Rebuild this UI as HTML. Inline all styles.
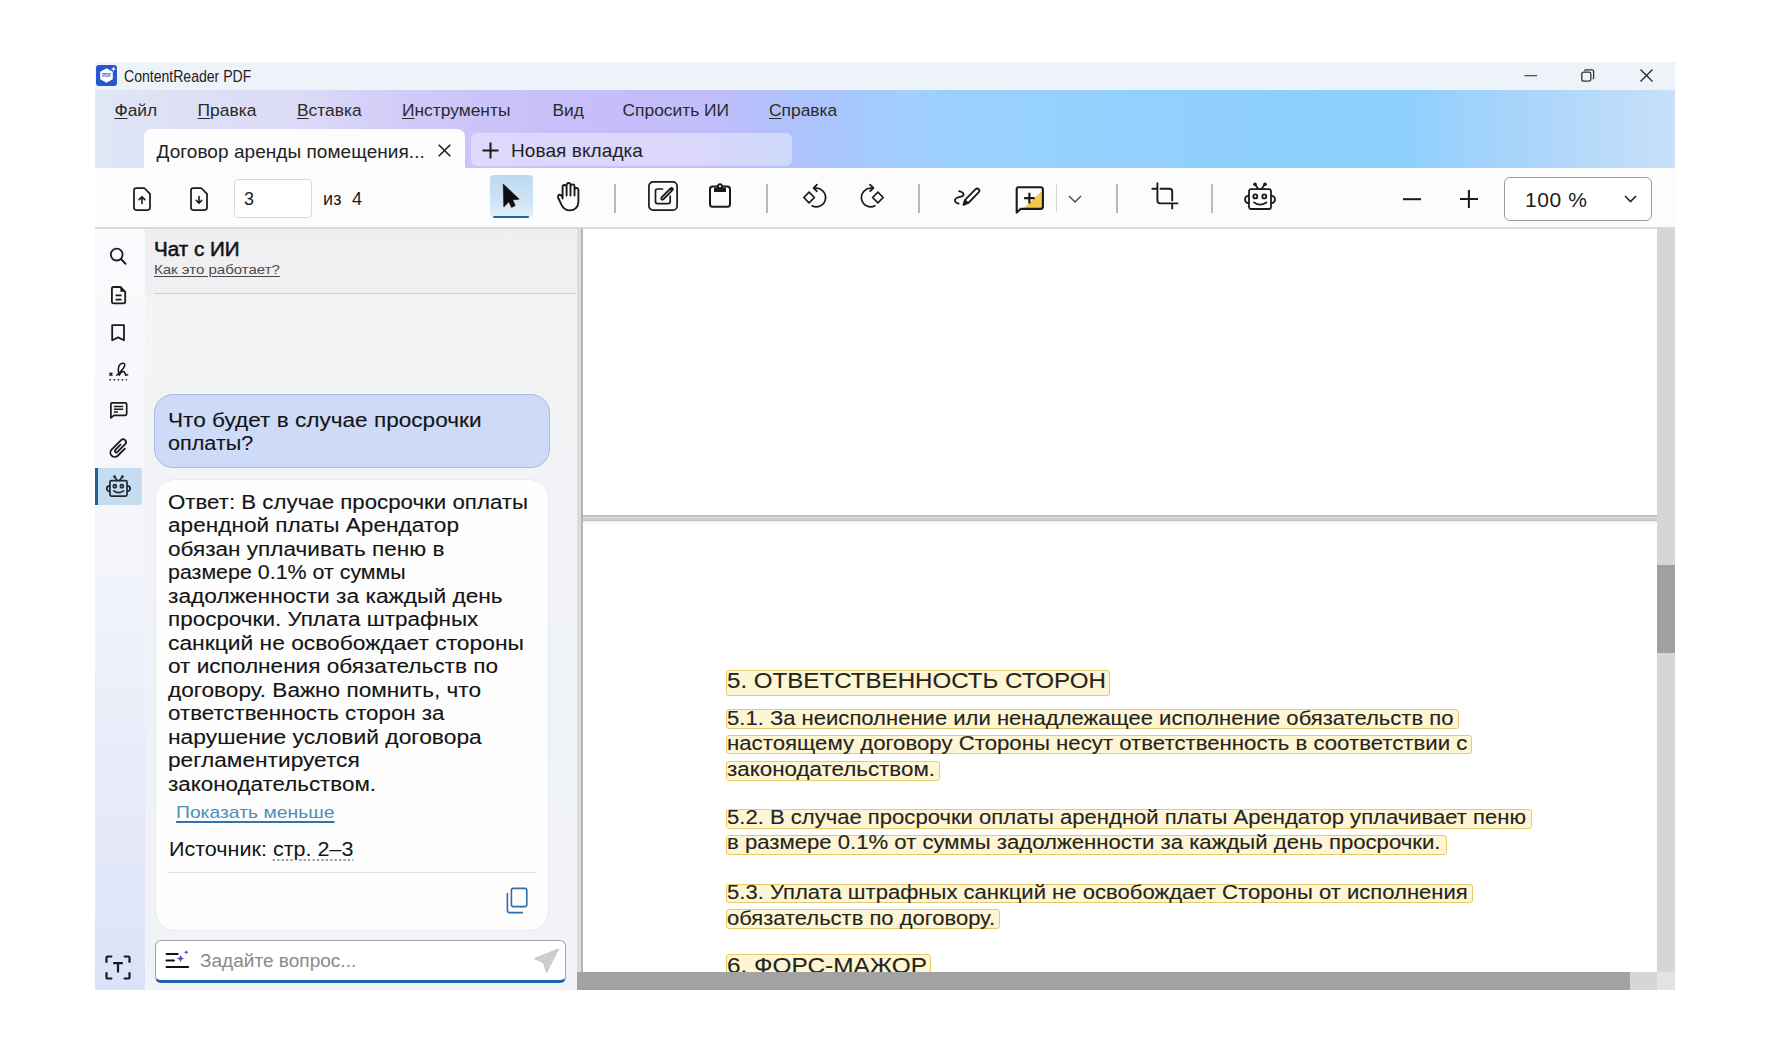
<!DOCTYPE html>
<html><head><meta charset="utf-8">
<style>
*{margin:0;padding:0;box-sizing:border-box}
html,body{width:1769px;height:1052px;overflow:hidden;background:#fff;font-family:"Liberation Sans",sans-serif;color:#1a1a1a}
.a{position:absolute}
svg{position:absolute;overflow:visible}
.t{position:absolute;white-space:nowrap;line-height:1}
.u{text-decoration:underline;text-underline-offset:2px}
</style></head><body>
<div class="a" style="left:95px;top:62px;width:1580px;height:28px;background:#eef2f9"></div>
<div class="a" style="left:95px;top:90px;width:1580px;height:78px;background:linear-gradient(90deg,#dfe6f5 0px,#dcdaf6 205px,#d2cbf8 305px,#cac2f9 405px,#c6bdfa 505px,#c3bdfa 605px,#b4c0fa 673px,#a9c6fc 741px,#a3cefd 809px,#9ad2fd 876px,#8ecefd 1180px,#8fcffd 1315px,#9fd2fc 1375px,#afd6fa 1455px,#bcdcf9 1525px,#c8e0f8 1580px)"></div>
<div class="a" style="left:95px;top:168px;width:1580px;height:59px;background:#fcfcfc"></div>
<div class="a" style="left:95px;top:227px;width:1580px;height:2px;background:#d9d9d9"></div>
<div class="a" style="left:95px;top:229px;width:50px;height:761px;background:linear-gradient(180deg,#f9fafc 0%,#f4f6fb 40%,#e7ebf9 72%,#dce2f8 100%)"></div>
<div class="a" style="left:145px;top:229px;width:432px;height:761px;background:linear-gradient(180deg,#efeff1 0px,#f0f0f2 64px,#f3f4f5 70px,#f2f3f6 250px,#eff2f7 450px,#f1f3f7 761px)"></div>
<div class="a" style="left:577px;top:229px;width:4px;height:743px;background:#dcdcdc"></div>
<div class="a" style="left:581px;top:229px;width:2px;height:743px;background:#b4b4b4"></div>
<div class="a" style="left:583px;top:229px;width:1074px;height:743px;background:#fff"></div>
<div class="a" style="left:1657px;top:229px;width:18px;height:743px;background:#d6d6d6"></div>
<div class="a" style="left:1657px;top:565px;width:18px;height:88px;background:#a0a0a0"></div>
<div class="a" style="left:577px;top:972px;width:1080px;height:18px;background:#d6d6d6"></div>
<div class="a" style="left:577px;top:972px;width:1053px;height:18px;background:#a2a2a2"></div>
<div class="a" style="left:1657px;top:972px;width:18px;height:18px;background:#e3e3e3"></div>
<svg style="left:96px;top:65px" width="21" height="21" viewBox="0 0 21 21"><rect x="0" y="0" width="21" height="21" rx="3" fill="#2657cf"/><path d="M10.5 3.2 L16.8 6.8 V14.2 L10.5 17.8 L4.2 14.2 V6.8 Z" fill="#fff"/><text x="10.5" y="12.2" font-size="4.6" font-family="Liberation Sans" font-weight="700" fill="#2b5fd9" text-anchor="middle">PDF</text><path d="M17.5 1.5 L18.2 3.3 L20 4 L18.2 4.7 L17.5 6.5 L16.8 4.7 L15 4 L16.8 3.3Z" fill="#fff"/></svg>
<div class="t" style="left:124px;top:68.66px;font-size:16px;color:#1e1e1e;transform:scaleX(0.878);transform-origin:0 0">ContentReader PDF</div>
<svg style="left:1524px;top:75px" width="14" height="2" viewBox="0 0 14 2"><line x1="0.5" y1="0.7" x2="13" y2="0.7" stroke="#333" stroke-width="1.1"/></svg>
<svg style="left:1581px;top:69px" width="14" height="13" viewBox="0 0 14 13"><rect x="0.8" y="3.2" width="9" height="9" rx="1.8" fill="none" stroke="#333" stroke-width="1.3"/><path d="M3.4 1.8 Q3.8 0.8 5 0.8 H11 Q12.6 0.8 12.6 2.4 V8.6 Q12.6 9.6 11.8 10" fill="none" stroke="#333" stroke-width="1.3"/></svg>
<svg style="left:1640px;top:69px" width="13" height="13" viewBox="0 0 13 13"><path d="M0.5 0.5 L12.5 12.5 M12.5 0.5 L0.5 12.5" stroke="#222" stroke-width="1.3"/></svg>
<div class="t" style="left:114.4px;top:101.77px;font-size:17.4px;color:#2a2a2a;text-underline-offset:1.5px;text-decoration-thickness:1px"><u>Ф</u>айл</div>
<div class="t" style="left:197.6px;top:101.77px;font-size:17.4px;color:#2a2a2a;text-underline-offset:1.5px;text-decoration-thickness:1px"><u>П</u>равка</div>
<div class="t" style="left:297px;top:101.77px;font-size:17.4px;color:#2a2a2a;text-underline-offset:1.5px;text-decoration-thickness:1px"><u>В</u>ставка</div>
<div class="t" style="left:402px;top:101.77px;font-size:17.4px;color:#2a2a2a;text-underline-offset:1.5px;text-decoration-thickness:1px"><u>И</u>нструменты</div>
<div class="t" style="left:552.4px;top:101.77px;font-size:17.4px;color:#2a2a2a;text-underline-offset:1.5px;text-decoration-thickness:1px">Вид</div>
<div class="t" style="left:622.5px;top:101.77px;font-size:17.4px;color:#2a2a2a;text-underline-offset:1.5px;text-decoration-thickness:1px">Спросить ИИ</div>
<div class="t" style="left:769px;top:101.77px;font-size:17.4px;color:#2a2a2a;text-underline-offset:1.5px;text-decoration-thickness:1px"><u>С</u>правка</div>
<div class="a" style="left:144px;top:129px;width:321px;height:40px;background:#fdfdfd;border-radius:8px 8px 0 0"></div>
<div class="t" style="left:156.5px;top:141.92px;font-size:19px;color:#222;letter-spacing:0.05px">Договор аренды помещения...</div>
<svg style="left:438px;top:144px" width="13" height="13" viewBox="0 0 13 13"><path d="M0.7 0.7 L12.3 12.3 M12.3 0.7 L0.7 12.3" stroke="#222" stroke-width="1.6"/></svg>
<div class="a" style="left:471px;top:133px;width:321px;height:33px;background:rgba(255,255,255,0.38);border-radius:6px"></div>
<svg style="left:482px;top:142px" width="17" height="17" viewBox="0 0 17 17"><path d="M8.5 0.5 V16.5 M0.5 8.5 H16.5" stroke="#1a1a1a" stroke-width="2"/></svg>
<div class="t" style="left:511px;top:141.42px;font-size:19px;color:#222;letter-spacing:0.08px">Новая вкладка</div>
<svg style="left:133px;top:187px" width="18" height="24" viewBox="0 0 18 24"><path d="M3.3 1 H11.2 L17 6.8 V20.6 Q17 23 14.6 23 H3.4 Q1 23 1 20.6 V3.4 Q1 1 3.3 1Z" fill="none" stroke="#1a1a1a" stroke-width="1.75" stroke-linejoin="round"/><path d="M9 16.5 V9.8 M6.2 12.6 L9 9.7 L11.8 12.6" fill="none" stroke="#1a1a1a" stroke-width="1.6" stroke-linecap="round" stroke-linejoin="round"/></svg>
<svg style="left:190px;top:187px" width="18" height="24" viewBox="0 0 18 24"><path d="M3.3 1 H11.2 L17 6.8 V20.6 Q17 23 14.6 23 H3.4 Q1 23 1 20.6 V3.4 Q1 1 3.3 1Z" fill="none" stroke="#1a1a1a" stroke-width="1.75" stroke-linejoin="round"/><path d="M9 9.5 V16 M6.2 13.3 L9 16.2 L11.8 13.3" fill="none" stroke="#1a1a1a" stroke-width="1.6" stroke-linecap="round" stroke-linejoin="round"/></svg>
<div class="a" style="left:234px;top:179px;width:78px;height:39px;background:#fff;border:1.5px solid #d9d9d9;border-radius:4px"></div>
<div class="t" style="left:244px;top:189.76px;font-size:18px;color:#1a1a1a">3</div>
<div class="t" style="left:323px;top:189.76px;font-size:18px;color:#1a1a1a;letter-spacing:0.3px">из</div>
<div class="t" style="left:352px;top:189.76px;font-size:18px;color:#1a1a1a">4</div>
<div class="a" style="left:489.5px;top:174.5px;width:43.5px;height:43.5px;background:linear-gradient(180deg,#bcdaf0 0%,#d0e4f4 60%,#e4eff9 100%);border-radius:4px"></div>
<div class="a" style="left:493px;top:215.5px;width:36px;height:2.6px;background:#1d66a6;border-radius:1.5px"></div>
<svg style="left:502.9px;top:184.3px" width="17" height="24" viewBox="0 0 17 24"><path d="M0.2 0 L0.8 23 L5.8 17.8 L8.6 23.4 L12.2 21.6 L9.6 15.8 L16.2 15.2 Z" fill="#0d0d0d" stroke="#0d0d0d" stroke-width="0.6" stroke-linejoin="round"/></svg>
<svg style="left:557px;top:181.5px" width="23" height="30" viewBox="0 0 23 30"><path d="M5.6 16.5 V5 A2 2 0 0 1 9.6 5 V13.5 M9.6 12.5 V2.6 A2 2 0 0 1 13.5 2.6 V13.5 M13.5 12.5 V4.4 A2 2 0 0 1 17.5 4.4 V13.5 M17.5 12.5 V7.6 A2 2 0 0 1 21.4 7.6 V19.5 C21.4 25.2 17.6 28.4 12.8 28.4 C8.6 28.4 6.1 26 4.4 22.6 L1.3 16 C0.6 14.4 1.2 13 2.5 12.8 C3.7 12.6 4.7 13.5 5.6 15.5" fill="none" stroke="#1a1a1a" stroke-width="1.9" stroke-linecap="round" stroke-linejoin="round"/></svg>
<div class="a" style="left:614.25px;top:184px;width:1.5px;height:29px;background:#b9b9b9"></div>
<div class="a" style="left:766.25px;top:184px;width:1.5px;height:29px;background:#b9b9b9"></div>
<div class="a" style="left:918.25px;top:184px;width:1.5px;height:29px;background:#b9b9b9"></div>
<div class="a" style="left:1055.85px;top:184px;width:1.5px;height:28px;background:#d2d2d2"></div>
<div class="a" style="left:1116.25px;top:184px;width:1.5px;height:29px;background:#b9b9b9"></div>
<div class="a" style="left:1211.25px;top:184px;width:1.5px;height:29px;background:#b9b9b9"></div>
<svg style="left:647.8px;top:181px" width="30" height="30" viewBox="0 0 30 30"><rect x="0.9" y="0.9" width="28.2" height="28.2" rx="4.2" fill="none" stroke="#1a1a1a" stroke-width="1.7"/><path d="M14.5 8 H9.5 Q7.5 8 7.5 10 V20.6 Q7.5 22.6 9.5 22.6 H20.2 Q22.2 22.6 22.2 20.6 V15" fill="none" stroke="#1a1a1a" stroke-width="1.7" stroke-linecap="round"/><path d="M13.6 16.4 L22.6 7.4 Q23.6 6.4 24.5 7.3 Q25.4 8.2 24.4 9.2 L15.4 18.2 Q14.3 19 13.6 18.3 Q12.9 17.5 13.6 16.4Z" fill="none" stroke="#1a1a1a" stroke-width="1.9"/><path d="M22.4 7.6 L24.2 9.4" stroke="#1a1a1a" stroke-width="2.2"/></svg>
<svg style="left:709px;top:182.5px" width="22" height="25" viewBox="0 0 22 25"><rect x="1" y="3.6" width="20" height="20.2" rx="2.6" fill="none" stroke="#1a1a1a" stroke-width="2"/><rect x="5" y="4.4" width="12" height="4.6" rx="0.6" fill="#1a1a1a"/><circle cx="11" cy="3.2" r="2.9" fill="#1a1a1a"/><circle cx="11" cy="3.3" r="1.1" fill="#fcfcfc"/></svg>
<svg style="left:795px;top:178px" width="40" height="36" viewBox="0 0 40 36"><path d="M14.1 14.2 L19.4 19.5 L14.1 24.8 L8.8 19.5 Z" fill="none" stroke="#1a1a1a" stroke-width="1.7" stroke-linejoin="round"/><path d="M19.5 10.4 A9.3 9.3 0 1 1 17 27.8" fill="none" stroke="#1a1a1a" stroke-width="1.7" stroke-linecap="round"/><path d="M22 6.6 L18.6 10 L21.8 13.2" fill="none" stroke="#1a1a1a" stroke-width="1.8" stroke-linecap="round" stroke-linejoin="round"/></svg>
<svg style="left:852px;top:178px" width="40" height="36" viewBox="0 0 40 36"><g transform="translate(40,0) scale(-1,1)"><path d="M14.1 14.2 L19.4 19.5 L14.1 24.8 L8.8 19.5 Z" fill="none" stroke="#1a1a1a" stroke-width="1.7" stroke-linejoin="round"/><path d="M19.5 10.4 A9.3 9.3 0 1 1 17 27.8" fill="none" stroke="#1a1a1a" stroke-width="1.7" stroke-linecap="round"/><path d="M22 6.6 L18.6 10 L21.8 13.2" fill="none" stroke="#1a1a1a" stroke-width="1.8" stroke-linecap="round" stroke-linejoin="round"/></g></svg>
<svg style="left:945px;top:178px" width="40" height="32" viewBox="0 0 40 32"><path d="M14.1 13.1 C17 13.6 19.2 15.6 18.4 17.4 C17.6 19.2 13.4 18.6 11 20.4 C8.8 22 9.8 25 13.7 25.6" fill="none" stroke="#1a1a1a" stroke-width="1.8" stroke-linecap="round"/><path d="M18.4 26.8 L20.05 21.8 L30.4 11.4 Q32 9.8 33.7 11.2 Q35.2 12.8 33.6 14.4 L23.35 25 Z" fill="none" stroke="#1a1a1a" stroke-width="1.8" stroke-linejoin="round"/><path d="M18.2 27 L20.4 21.4 L24 24.8 Z" fill="#1a1a1a"/></svg>
<svg style="left:1015px;top:186px" width="30" height="28" viewBox="0 0 30 28"><path d="M9 22 L27 5 V22 Z" fill="#f2c94c"/><path d="M3.4 1.3 H25.6 Q27.9 1.3 27.9 3.6 V20.6 Q27.9 22.9 25.6 22.9 H5.6 L1.7 26.6 V3.6 Q1.7 1.3 3.4 1.3Z" fill="none" stroke="#1a1a1a" stroke-width="2.1" stroke-linejoin="round"/><path d="M14.4 6.8 V17.4 M9.1 12.1 H19.7" stroke="#1a1a1a" stroke-width="2.2"/></svg>
<svg style="left:1068px;top:195px" width="14" height="8" viewBox="0 0 14 8"><path d="M1 1 L7 7 L13 1" fill="none" stroke="#444" stroke-width="1.3"/></svg>
<svg style="left:1150px;top:182px" width="30" height="30" viewBox="0 0 30 30"><path d="M7.4 1.3 V18.6 Q7.4 21.4 10.2 21.4 H27.5 M2.3 6.8 H7.4 M10.5 6.8 H19.4 Q22.2 6.8 22.2 9.6 V18.4 M22.2 21.4 V26.6" fill="none" stroke="#1a1a1a" stroke-width="1.9" stroke-linecap="round"/></svg>
<svg style="left:1244px;top:182px" width="32.0" height="30.0" viewBox="0 0 32.0 30.0"><g transform="scale(1.0)" fill="none" stroke="#1a1a1a" stroke-width="1.8"><rect x="5" y="7.2" width="22" height="19.8" rx="2"/><path d="M5 13.6 Q1 14.2 1 17.4 Q1 20.6 5 21.2 M27 13.6 Q31 14.2 31 17.4 Q31 20.6 27 21.2"/><circle cx="11.3" cy="14.4" r="2"/><circle cx="20.3" cy="14.4" r="2"/><path d="M10 20.4 Q16 25 22.4 20.4" stroke-linecap="round"/><path d="M14.3 7 L11 2.2 M17.3 7 L21 2.2" stroke-linecap="round"/></g><g transform="scale(1.0)" fill="#1a1a1a"><circle cx="11" cy="2.2" r="1.8"/><circle cx="21" cy="2.2" r="1.8"/></g></svg>
<svg style="left:1402px;top:198px" width="20" height="3" viewBox="0 0 20 3"><line x1="1" y1="1.2" x2="19" y2="1.2" stroke="#1a1a1a" stroke-width="2"/></svg>
<svg style="left:1459px;top:189px" width="20" height="20" viewBox="0 0 20 20"><path d="M9.9 1 V19 M1 10 H19" stroke="#1a1a1a" stroke-width="2"/></svg>
<div class="a" style="left:1504px;top:176.5px;width:147.5px;height:44px;background:#fff;border:1.5px solid #9a9a9a;border-radius:6px"></div>
<div class="t" style="left:1525px;top:188.72px;font-size:21px;color:#1a1a1a;letter-spacing:0.6px">100 %</div>
<svg style="left:1624px;top:195px" width="13" height="8" viewBox="0 0 13 8"><path d="M1 1 L6.5 6.5 L12 1" fill="none" stroke="#222" stroke-width="1.6"/></svg>
<svg style="left:108px;top:247px" width="20" height="20" viewBox="0 0 20 20"><circle cx="8.7" cy="7.6" r="5.9" fill="none" stroke="#1a1a1a" stroke-width="1.8"/><path d="M13 12 L17.6 16.8" stroke="#1a1a1a" stroke-width="1.9" stroke-linecap="round"/></svg>
<svg style="left:111px;top:286px" width="16" height="19" viewBox="0 0 16 19"><path d="M2.6 1 H9.4 L14.2 5.8 V15.6 Q14.2 17.4 12.4 17.4 H2.6 Q0.9 17.4 0.9 15.6 V2.8 Q0.9 1 2.6 1Z" fill="none" stroke="#1a1a1a" stroke-width="1.8" stroke-linejoin="round"/><path d="M9.4 1 V5.8 H14.2Z" fill="#1a1a1a"/><path d="M4.6 9.4 H10.6 M4.6 13.6 H10.6" stroke="#1a1a1a" stroke-width="1.7"/></svg>
<svg style="left:111px;top:324px" width="15" height="18" viewBox="0 0 15 18"><path d="M1.2 1.2 H13 V16.2 L7.1 13.4 L1.2 16.2 Z" fill="none" stroke="#1a1a1a" stroke-width="1.8" stroke-linejoin="round"/></svg>
<svg style="left:108px;top:362px" width="21" height="20" viewBox="0 0 21 20"><path d="M8.8 13.3 C12 10 17.6 5.6 16.8 2.4 C16.2 0.4 12.4 0.8 11.2 3.6 C10.2 6 10.2 10.6 11.3 13.3 C12 11.4 13 9.6 14.8 9.4 C17.2 9.2 17.2 12 17.7 13.3 L19.7 12.6" fill="none" stroke="#1a1a1a" stroke-width="1.5" stroke-linecap="round" stroke-linejoin="round"/><path d="M1.4 10.8 L4.4 13.8 M4.4 10.8 L1.4 13.8" stroke="#1a1a1a" stroke-width="1.4"/><path d="M1.4 17.7 H19" stroke="#333" stroke-width="1.5" stroke-dasharray="1.6 2.5"/></svg>
<svg style="left:109px;top:401px" width="20" height="19" viewBox="0 0 20 19"><path d="M2.9 1.9 H16.2 Q17.7 1.9 17.7 3.4 V12.8 Q17.7 14.3 16.2 14.3 H5 L1.9 16.9 V3.4 Q1.9 1.9 2.9 1.9Z" fill="none" stroke="#1a1a1a" stroke-width="1.7" stroke-linejoin="round"/><path d="M4.9 5.4 H14.2 M4.9 8.2 H14.2 M4.9 10.9 H9" stroke="#1a1a1a" stroke-width="1.5"/></svg>
<svg style="left:109.3px;top:436.8px" width="20" height="20" viewBox="0 0 20 20"><path d="M15.9 11.6 L8.75 18.75 A4.35 4.35 0 0 1 2.6 12.6 L12.1 3.1 A2.9 2.9 0 0 1 16.2 7.2 L8.45 14.95 A1.48 1.48 0 0 1 6.35 12.85 L11.5 7.7" fill="none" stroke="#1a1a1a" stroke-width="1.8" stroke-linecap="round"/></svg>
<div class="a" style="left:95.4px;top:468.3px;width:46.6px;height:36.4px;background:#c6dcf1;border-radius:0 2px 2px 0"></div>
<div class="a" style="left:95px;top:468.3px;width:3px;height:36.4px;background:#245f8e"></div>
<svg style="left:106px;top:475.4px" width="24.96" height="23.400000000000002" viewBox="0 0 24.96 23.400000000000002"><g transform="scale(0.78)" fill="none" stroke="#1f2a36" stroke-width="2.2"><rect x="5" y="7.2" width="22" height="19.8" rx="2"/><path d="M5 13.6 Q1 14.2 1 17.4 Q1 20.6 5 21.2 M27 13.6 Q31 14.2 31 17.4 Q31 20.6 27 21.2"/><circle cx="11.3" cy="14.4" r="2"/><circle cx="20.3" cy="14.4" r="2"/><path d="M10 20.4 Q16 25 22.4 20.4" stroke-linecap="round"/><path d="M14.3 7 L11 2.2 M17.3 7 L21 2.2" stroke-linecap="round"/></g><g transform="scale(0.78)" fill="#1f2a36"><circle cx="11" cy="2.2" r="1.8"/><circle cx="21" cy="2.2" r="1.8"/></g></svg>
<svg style="left:105px;top:955px" width="27" height="26" viewBox="0 0 27 26"><path d="M1.5 7 V2.6 Q1.5 1.5 2.6 1.5 H6.4 M19.6 1.5 H23.4 Q24.5 1.5 24.5 2.6 V7 M24.5 18 V22.4 Q24.5 23.5 23.4 23.5 H19.6 M6.4 23.5 H2.6 Q1.5 23.5 1.5 22.4 V18" fill="none" stroke="#1a1a1a" stroke-width="2.2" stroke-linecap="round"/><path d="M8.2 8.2 H17.8 M13 8.2 V17.6" stroke="#1a1a1a" stroke-width="2.2"/></svg>
<div class="t" style="left:154px;top:239.07px;font-size:20px;color:#141414;transform:scaleX(1.03);transform-origin:0 0;-webkit-text-stroke:0.55px #141414">Чат с ИИ</div>
<div class="t" style="left:154px;top:262.97px;font-size:13.5px;color:#4a4a4a;transform:scaleX(1.113);transform-origin:0 0;text-decoration:underline;text-underline-offset:1.5px;text-decoration-thickness:1px">Как это работает?</div>
<div class="a" style="left:154px;top:292.5px;width:422px;height:1.6px;background:#cfd0d4"></div>
<div class="a" style="left:154px;top:394px;width:396px;height:74px;background:#cddbf9;border:1px solid #a9b9e6;border-radius:19px"></div>
<div class="t" style="left:167.6px;top:409.67px;font-size:20px;color:#141414;transform:scaleX(1.1300);transform-origin:0 0;-webkit-text-stroke:0.12px #141414">Что будет в случае просрочки</div>
<div class="t" style="left:167.6px;top:432.67px;font-size:20px;color:#141414;transform:scaleX(1.0810);transform-origin:0 0;-webkit-text-stroke:0.12px #141414">оплаты?</div>
<div class="a" style="left:154.6px;top:479px;width:394px;height:452px;background:#fdfdfd;border:1px solid #e9eaee;border-radius:20px"></div>
<div class="t" style="left:168px;top:491.57px;font-size:20px;color:#141414;transform:scaleX(1.1136);transform-origin:0 0;-webkit-text-stroke:0.12px #141414">Ответ: В случае просрочки оплаты</div>
<div class="t" style="left:168px;top:515.07px;font-size:20px;color:#141414;transform:scaleX(1.1304);transform-origin:0 0;-webkit-text-stroke:0.12px #141414">арендной платы Арендатор</div>
<div class="t" style="left:168px;top:538.57px;font-size:20px;color:#141414;transform:scaleX(1.1283);transform-origin:0 0;-webkit-text-stroke:0.12px #141414">обязан уплачивать пеню в</div>
<div class="t" style="left:168px;top:562.07px;font-size:20px;color:#141414;transform:scaleX(1.0704);transform-origin:0 0;-webkit-text-stroke:0.12px #141414">размере 0.1% от суммы</div>
<div class="t" style="left:168px;top:585.57px;font-size:20px;color:#141414;transform:scaleX(1.1365);transform-origin:0 0;-webkit-text-stroke:0.12px #141414">задолженности за каждый день</div>
<div class="t" style="left:168px;top:609.07px;font-size:20px;color:#141414;transform:scaleX(1.1231);transform-origin:0 0;-webkit-text-stroke:0.12px #141414">просрочки. Уплата штрафных</div>
<div class="t" style="left:168px;top:632.57px;font-size:20px;color:#141414;transform:scaleX(1.1404);transform-origin:0 0;-webkit-text-stroke:0.12px #141414">санкций не освобождает стороны</div>
<div class="t" style="left:168px;top:656.07px;font-size:20px;color:#141414;transform:scaleX(1.1296);transform-origin:0 0;-webkit-text-stroke:0.12px #141414">от исполнения обязательств по</div>
<div class="t" style="left:168px;top:679.57px;font-size:20px;color:#141414;transform:scaleX(1.1301);transform-origin:0 0;-webkit-text-stroke:0.12px #141414">договору. Важно помнить, что</div>
<div class="t" style="left:168px;top:703.07px;font-size:20px;color:#141414;transform:scaleX(1.1155);transform-origin:0 0;-webkit-text-stroke:0.12px #141414">ответственность сторон за</div>
<div class="t" style="left:168px;top:726.57px;font-size:20px;color:#141414;transform:scaleX(1.1411);transform-origin:0 0;-webkit-text-stroke:0.12px #141414">нарушение условий договора</div>
<div class="t" style="left:168px;top:750.07px;font-size:20px;color:#141414;transform:scaleX(1.1340);transform-origin:0 0;-webkit-text-stroke:0.12px #141414">регламентируется</div>
<div class="t" style="left:168px;top:773.57px;font-size:20px;color:#141414;transform:scaleX(1.1186);transform-origin:0 0;-webkit-text-stroke:0.12px #141414">законодательством.</div>
<div class="t" style="left:175.5px;top:804.11px;font-size:17px;color:#4a8fb8;transform:scaleX(1.136);transform-origin:0 0;text-decoration:underline;text-decoration-color:#2f74b0;text-underline-offset:2.5px;text-decoration-thickness:2px">Показать меньше</div>
<div class="t" style="left:168.5px;top:840.49px;font-size:19.5px;color:#141414;transform:scaleX(1.104);transform-origin:0 0">Источник: <span style="text-decoration:underline dotted #999;text-underline-offset:3px;text-decoration-thickness:1.5px">стр. 2–3</span></div>
<div class="a" style="left:168px;top:871.8px;width:368px;height:1.6px;background:#e2e2e4"></div>
<svg style="left:505px;top:887px" width="24" height="28" viewBox="0 0 24 28"><path d="M6.4 3.4 Q6.4 1.4 8.4 1.4 H19.8 Q21.8 1.4 21.8 3.4 V17.6 Q21.8 19.6 19.8 19.6 H8.4 Q6.4 19.6 6.4 17.6 Z" fill="none" stroke="#2e6da8" stroke-width="1.6"/><path d="M2.4 6.6 V23.6 Q2.4 25.6 4.4 25.6 H17.4" fill="none" stroke="#2e6da8" stroke-width="1.6" stroke-linecap="round"/></svg>
<div class="a" style="left:154.6px;top:940px;width:411.4px;height:42.6px;background:#fff;border:1px solid #a4a4a4;border-bottom:3px solid #1d62a6;border-radius:6px"></div>
<svg style="left:165px;top:948px" width="26" height="22" viewBox="0 0 26 22"><path d="M1.5 5.9 H12.7 M1.5 12.5 H9 M1.5 19 H23.1" stroke="#111" stroke-width="2" stroke-linecap="round"/><path d="M15.5 6.6 Q16 10.1 19.5 10.6 Q16 11.1 15.5 14.6 Q15 11.1 11.5 10.6 Q15 10.1 15.5 6.6Z" fill="#5157c4"/><path d="M21.2 1.9 Q21.5 3.9 23.5 4.2 Q21.5 4.5 21.2 6.5 Q20.9 4.5 18.9 4.2 Q20.9 3.9 21.2 1.9Z" fill="#5157c4"/></svg>
<div class="t" style="left:200px;top:952.46px;font-size:18px;color:#8a8a8a;transform:scaleX(1.058);transform-origin:0 0">Задайте вопрос...</div>
<svg style="left:533px;top:948px" width="27" height="26" viewBox="0 0 27 26"><path d="M25.5 1 L1.5 10.6 L10.4 14.4 L13.6 24.4 Z M25.5 1 L10.4 14.4" fill="#cfcfcf" stroke="#c4c4c4" stroke-width="1" stroke-linejoin="round"/></svg>
<div class="a" style="left:583px;top:515px;width:1074px;height:6px;background:linear-gradient(180deg,#bdbdbd 0%,#bdbdbd 18%,#d4d4d4 35%,#d4d4d4 70%,#bdbdbd 85%,#c4c4c4 100%)"></div>
<div class="a" style="left:583px;top:521px;width:1074px;height:3px;background:linear-gradient(180deg,#f2f2f2,#fcfcfc)"></div>
<div class="a" style="left:725.8px;top:670px;width:384.20000000000005px;height:26px;background:#fdf5d4;border:1.2px solid #e8ca68;border-radius:3px"></div>
<div class="t" style="left:727px;top:669.84px;font-size:22.4px;color:#24241a;transform:scaleX(1.0768);transform-origin:0 0;-webkit-text-stroke:0.12px #24241a">5. ОТВЕТСТВЕННОСТЬ СТОРОН</div>
<div class="a" style="left:725.8px;top:709px;width:732.9000000000001px;height:20px;background:#fdf5d4;border:1.2px solid #e8ca68;border-radius:3px"></div>
<div class="t" style="left:727px;top:707.65px;font-size:20.5px;color:#24241a;transform:scaleX(1.0756);transform-origin:0 0;-webkit-text-stroke:0.12px #24241a">5.1. За неисполнение или ненадлежащее исполнение обязательств по</div>
<div class="a" style="left:725.8px;top:734.6px;width:746.6000000000001px;height:19.799999999999955px;background:#fdf5d4;border:1.2px solid #e8ca68;border-radius:3px"></div>
<div class="t" style="left:727px;top:733.35px;font-size:20.5px;color:#24241a;transform:scaleX(1.0832);transform-origin:0 0;-webkit-text-stroke:0.12px #24241a">настоящему договору Стороны несут ответственность в соответствии с</div>
<div class="a" style="left:725.8px;top:760.5px;width:214.20000000000005px;height:20.100000000000023px;background:#fdf5d4;border:1.2px solid #e8ca68;border-radius:3px"></div>
<div class="t" style="left:727px;top:758.65px;font-size:20.5px;color:#24241a;transform:scaleX(1.0913);transform-origin:0 0;-webkit-text-stroke:0.12px #24241a">законодательством.</div>
<div class="a" style="left:725.8px;top:808.5px;width:805.9000000000001px;height:20.0px;background:#fdf5d4;border:1.2px solid #e8ca68;border-radius:3px"></div>
<div class="t" style="left:727px;top:806.65px;font-size:20.5px;color:#24241a;transform:scaleX(1.0762);transform-origin:0 0;-webkit-text-stroke:0.12px #24241a">5.2. В случае просрочки оплаты арендной платы Арендатор уплачивает пеню</div>
<div class="a" style="left:725.8px;top:835px;width:720.8px;height:19.600000000000023px;background:#fdf5d4;border:1.2px solid #e8ca68;border-radius:3px"></div>
<div class="t" style="left:727px;top:832.15px;font-size:20.5px;color:#24241a;transform:scaleX(1.0798);transform-origin:0 0;-webkit-text-stroke:0.12px #24241a">в размере 0.1% от суммы задолженности за каждый день просрочки.</div>
<div class="a" style="left:725.8px;top:884px;width:747.7px;height:19.399999999999977px;background:#fdf5d4;border:1.2px solid #e8ca68;border-radius:3px"></div>
<div class="t" style="left:727px;top:882.05px;font-size:20.5px;color:#24241a;transform:scaleX(1.0764);transform-origin:0 0;-webkit-text-stroke:0.12px #24241a">5.3. Уплата штрафных санкций не освобождает Стороны от исполнения</div>
<div class="a" style="left:725.8px;top:909px;width:274.20000000000005px;height:19.600000000000023px;background:#fdf5d4;border:1.2px solid #e8ca68;border-radius:3px"></div>
<div class="t" style="left:727px;top:907.65px;font-size:20.5px;color:#24241a;transform:scaleX(1.0720);transform-origin:0 0;-webkit-text-stroke:0.12px #24241a">обязательств по договору.</div>
<div class="a" style="left:725.8px;top:954.3px;width:205.20000000000005px;height:25.700000000000045px;background:#fdf5d4;border:1.2px solid #e8ca68;border-radius:3px"></div>
<div class="t" style="left:727px;top:954.54px;font-size:22.4px;color:#24241a;transform:scaleX(1.0879);transform-origin:0 0;-webkit-text-stroke:0.12px #24241a">6. ФОРС-МАЖОР</div>
<div class="a" style="left:577px;top:972px;width:1080px;height:18px;background:#d6d6d6"></div>
<div class="a" style="left:577px;top:972px;width:1053px;height:18px;background:#a2a2a2"></div>
<div class="a" style="left:1657px;top:972px;width:18px;height:18px;background:#e3e3e3"></div>
<div class="a" style="left:95px;top:990px;width:1600px;height:40px;background:#fff"></div>
</body></html>
